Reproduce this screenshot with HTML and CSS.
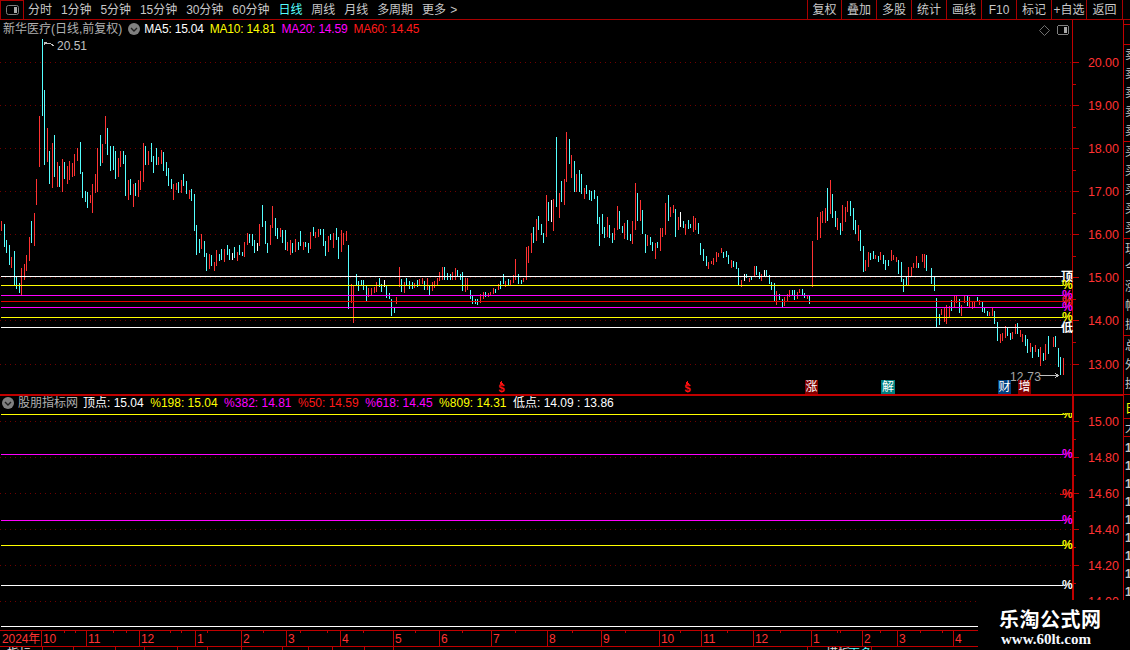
FILE: index.html
```html
<!DOCTYPE html>
<html lang="zh-CN">
<head>
<meta charset="utf-8">
<title>新华医疗 日线</title>
<link rel="stylesheet" href="styles.css">
</head>
<body>
<div class="app">
  <header class="toolbar">
    <button class="panel-btn" aria-label="panel">
      <svg class="panel-icon" viewBox="0 0 13 10"><rect x=".5" y=".5" width="12" height="9" rx="2" class="icon-frame"/><rect x="8" y="2" width="3" height="6" class="icon-fill"/></svg>
    </button>
    <nav class="periods">
      <span>分时</span><span>1分钟</span><span>5分钟</span><span>15分钟</span><span>30分钟</span><span>60分钟</span><span class="active">日线</span><span>周线</span><span>月线</span><span>多周期</span><span>更多 <i class="more">&gt;</i></span>
    </nav>
    <div class="tools">
      <span>复权</span><span>叠加</span><span>多股</span><span>统计</span><span>画线</span><span>F10</span><span>标记</span><span>+自选</span><span>返回</span>
    </div>
  </header>

  <div class="workspace">
    <main class="charts">
      <section class="panel main-panel">
        <svg class="chart" viewBox="0 20 1123 374">
          <path class="grid" d="M0 62.5H1072M0 105.5H1072M0 148.5H1072M0 191.5H1072M0 234.5H1072M0 277.5H1072M0 320.5H1072M0 364.5H1072"/>
          <g transform="translate(.17 100) scale(.33333)">
            <path class="bar-r" d="M4 363V393M34 471V503M64 504V585M73 492V540M79 465V513M88 411V483M103 339V437M109 237V315M118 48V201M142 84V186M157 129V264M172 186V261M187 177V276M202 198V252M208 183V240M217 189V231M223 162V228M232 144V183M271 285V309M277 252V339M286 222V279M292 145V276M307 132V189M316 48V132M355 174V231M361 153V201M385 240V300M400 252V321M415 240V291M421 213V270M430 129V246M445 153V195M475 171V195M484 150V192M520 252V300M529 249V270M544 240V279M568 270V297M604 402V447M628 462V507M643 486V513M649 450V498M673 447V486M712 456V483M733 426V471M742 399V435"/>
            <path class="bar-c" d="M13 372V441M19 420V459M28 435V495M43 453V555M49 531V567M58 549V579M94 363V429M127 -183V48M133 -30V195M148 153V252M163 105V231M178 198V261M193 186V237M241 126V222M247 216V294M256 273V306M262 276V324M301 105V198M322 84V165M331 138V213M340 138V210M346 153V237M370 153V192M376 165V288M391 237V285M406 249V288M436 138V195M454 129V186M460 168V219M469 144V195M490 156V213M499 186V228M505 204V258M514 237V267M535 246V279M550 222V258M559 243V282M574 267V303M583 282V393M589 375V465M598 417V459M613 423V471M619 459V513M634 465V498M658 462V483M664 447V480M682 435V465M688 447V480M703 441V474M718 435V465M727 456V468M748 402V429"/>
            <path class="bar-w" d="M697 459V480"/>
          </g>
          <g transform="translate(250.17 120) scale(.33333)">
            <path class="bar-r" d="M28 312V378M61 315V375M67 258V324M91 324V351M112 366V393M121 360V405M136 357V396M160 366V390M181 336V387M196 336V354M205 327V351M235 348V396M250 339V384M274 330V396M280 339V375M289 333V363M304 492V549M310 498V609M355 504V531M364 504V528M373 501V519M379 486V516M439 531V552M448 441V501M463 486V519M493 489V504M508 477V498M517 474V492M532 474V510M547 486V513M553 483V504M562 474V495M568 456V483M577 441V480M607 456V480M616 444V480M646 474V516M652 474V510M691 522V549M700 516V537M715 519V531M721 516V525M730 504V522M745 492V510M766 483V501M781 480V495M790 465V489M796 417V480M820 474V486M829 381V480M835 378V429M844 339V399M859 297V363M889 225V351"/>
            <path class="bar-c" d="M7 342V378M13 360V399M37 255V321M46 303V372M52 369V399M76 294V348M82 324V357M97 330V369M106 330V390M127 369V399M145 366V390M151 333V378M166 366V381M175 369V399M190 321V348M211 327V345M220 327V378M226 363V408M241 342V360M259 324V360M265 351V417M295 375V567M319 462V495M325 483V513M334 480V495M340 480V510M349 498V543M388 474V501M394 492V516M409 498V534M418 519V537M424 537V588M433 564V579M454 477V516M469 474V495M478 483V507M487 486V507M502 480V501M523 483V510M538 495V525M583 441V480M592 459V480M601 462V480M622 450V471M631 462V480M637 456V513M661 510V537M667 528V552M676 537V552M682 537V555M706 516V531M736 507V519M751 483V507M760 462V492M775 477V495M805 462V492M814 480V492M850 321V369M865 288V330M874 312V345M880 339V369M895 246V303"/>
            <path class="bar-w" d="M22 369V393M403 480V501"/>
          </g>
          <g transform="translate(520.17 120) scale(.33333)">
            <path class="bar-r" d="M100 237V333M118 219V294M133 177V255M139 36V186M154 105V174M169 162V216M193 204V237M262 291V351M283 324V360M292 258V330M313 309V357M337 303V372M346 189V330M361 240V303M382 345V378M406 369V417M421 324V393M427 324V351M436 249V345M451 261V291M460 255V279M475 291V330M496 312V345M520 288V336M526 294V330M565 426V447M574 423V432M580 414V435M589 396V426M595 399V411M604 384V399M634 420V444M664 480V501M688 474V486M703 438V468M724 462V483M769 513V555M793 531V558M802 522V543M808 510V531M832 516V537M838 507V519M862 528V537M877 363V501"/>
            <path class="bar-c" d="M109 51V261M124 183V246M148 57V132M163 123V216M178 150V216M184 162V222M199 195V222M208 210V240M214 213V243M223 210V237M232 228V312M238 291V378M247 282V342M253 321V354M268 315V354M277 339V369M298 273V327M307 318V339M322 300V360M331 342V363M352 219V303M367 270V342M376 342V399M391 351V375M397 366V393M412 366V384M445 225V303M466 267V351M490 303V324M505 300V327M511 312V324M535 309V342M541 369V405M550 387V423M559 408V438M610 396V414M619 393V411M625 405V432M640 423V441M649 426V447M655 444V495M679 462V474M694 471V480M709 438V465M718 456V477M739 450V468M748 465V492M754 486V510M763 489V543M778 522V540M787 537V561M817 510V525M823 510V540M847 507V525M853 519V534M868 528V552"/>
            <path class="bar-w" d="M94 240V306M481 276V321M673 462V483M733 450V468"/>
          </g>
          <g transform="translate(790.17 170) scale(.33333)">
            <path class="bar-r" d="M82 141V210M91 126V204M97 123V159M106 114V159M121 30V132M142 144V180M157 105V183M166 111V156M172 93V126M205 165V213M226 270V303M235 246V291M256 255V267M271 246V270M304 240V273M310 255V270M319 261V276M355 291V345M364 291V318M370 279V294M379 258V294M397 252V276M403 252V294M454 417V435M463 411V456M469 405V462M478 408V444M493 378V414M499 378V399M514 405V438M523 378V399M538 381V414M547 396V417M553 396V411M568 390V405M598 426V438M607 414V438M631 492V519M637 489V513M646 468V504M667 486V507M676 462V492M691 480V501M697 492V516M721 519V546M736 525V546M751 531V588M766 522V570M790 501V531M820 564V615"/>
            <path class="bar-c" d="M112 54V153M127 72V144M136 123V171M151 159V195M181 93V138M190 114V180M196 150V192M211 180V243M220 228V306M241 249V270M250 243V267M265 258V276M280 255V282M286 270V300M295 270V288M325 270V312M334 276V336M340 327V366M349 318V348M385 279V294M409 255V303M424 294V342M433 321V363M439 384V471M448 432V465M484 390V423M508 387V429M532 378V408M562 381V393M577 396V426M583 414V429M592 423V438M613 423V462M622 456V513M652 471V498M661 489V510M682 459V492M706 495V528M712 507V549M727 531V564M745 537V561M760 549V573M775 498V552M796 498V531M805 534V591M811 561V615"/>
          </g>
          <path class="lvl-w" d="M1 276.5H1063M1 327.5H1063"/>
          <path class="lvl-y" d="M1 285.5H1063M1 317.5H1063"/>
          <path class="lvl-m" d="M1 295.5H1063M1 307.5H1063"/>
          <path class="lvl-r" d="M1 301.5H1063"/>
          <path class="axis" d="M1072.5 20V394"/>
          <path class="axis" d="M1072 62.5H1079M1072 105.5H1079M1072 148.5H1079M1072 191.5H1079M1072 234.5H1079M1072 277.5H1079M1072 320.5H1079M1072 364.5H1079M1072 84.5H1076M1072 127.5H1076M1072 170.5H1076M1072 213.5H1076M1072 256.5H1076M1072 299.5H1076M1072 342.5H1076"/>
          <g class="price">
            <text x="1088" y="67">20.00</text><text x="1088" y="110">19.00</text><text x="1088" y="153">18.00</text><text x="1088" y="196">17.00</text><text x="1088" y="239">16.00</text><text x="1088" y="282">15.00</text><text x="1088" y="325">14.00</text><text x="1088" y="369">13.00</text>
          </g>
          <g class="lvl-label">
            <text class="t-w" x="1061" y="281">顶</text><text class="t-y" x="1062" y="289">%</text><text class="t-m" x="1062" y="299">%</text><text class="t-r" x="1062" y="305">%</text><text class="t-m" x="1062" y="311">%</text><text class="t-y" x="1062" y="321">%</text><text class="t-w" x="1061" y="332">低</text>
          </g>
          <text class="note" x="57" y="50">20.51</text>
          <path class="note-line" d="M44 42L47 44L50 43.500L54 46M44 42V45M44 42L47 42"/>
          <text class="note wide" x="1010" y="381">12.73</text>
          <path class="note-line" d="M1040 375.500H1058M1055 373L1058 375.500L1055 378"/>
          <g class="signal">
            <path class="sig-arrow" d="M501.500 381L499.500 384H503.500ZM687.500 381L685.500 384H689.500Z"/>
            <text x="501.500" y="392">$</text><text x="687.500" y="392">$</text>
          </g>
          <g class="badge">
            <rect class="bg-red" x="805" y="380" width="13" height="14"/><text x="811.500" y="391">涨</text>
            <rect class="bg-teal" x="881" y="380" width="14" height="14"/><text x="888" y="391">解</text>
            <rect class="bg-blue" x="998" y="380" width="13" height="14"/><text x="1004.500" y="391">财</text>
            <rect class="bg-red" x="1018" y="380" width="13" height="14"/><text x="1024.500" y="391">增</text>
          </g>
          <path class="diamond" d="M1044.500 25.500L1049.500 30.500L1044.500 35.500L1039.500 30.500Z"/>
          <rect class="icon-frame" x="1057.500" y="25.500" width="11" height="9" rx="2"/>
          <rect class="icon-fill" x="1064" y="27" width="3" height="6"/>
        </svg>
        <div class="legend main-legend">
          <span class="title">新华医疗(日线,前复权)</span>
          <svg class="chev" viewBox="0 0 12 12"><circle cx="6" cy="6" r="6" class="chev-bg"/><path d="M3 5L6 8L9 5" class="chev-mark"/></svg>
          <span class="c-w">MA5: 15.04</span><span class="c-y">MA10: 14.81</span><span class="c-m">MA20: 14.59</span><span class="c-r">MA60: 14.45</span>
        </div>
      </section>

      <section class="panel sub-panel">
        <svg class="chart" viewBox="0 396 1123 234">
          <defs><clipPath id="clip-top"><rect x="1060" y="413" width="12" height="10"/></clipPath></defs>
          <path class="grid" d="M0 421.500H1072M0 457.500H1072M0 493.500H1072M0 529.500H1072M0 565.500H1072M0 601.500H1072"/>
          <path class="lvl-y" d="M1 414.500H1063M1 545.500H1063"/>
          <path class="lvl-m" d="M1 454.500H1063M1 520.500H1063"/>
          <path class="lvl-w" d="M1 585.500H1063M1 626.500H978"/>
          <path class="lvl-r" d="M1060 494.500H1063"/>
          <path class="axis thick" d="M1073 396V630"/>
          <path class="axis" d="M1072 421.500H1079M1072 457.500H1079M1072 493.500H1079M1072 529.500H1079M1072 565.500H1079M1072 601.500H1079M1072 439.500H1076M1072 475.500H1076M1072 511.500H1076M1072 547.500H1076M1072 583.500H1076"/>
          <g class="price">
            <text x="1088" y="426">15.00</text><text x="1088" y="462">14.80</text><text x="1088" y="498">14.60</text><text x="1088" y="534">14.40</text><text x="1088" y="570">14.20</text><text x="1088" y="606">14.00</text>
          </g>
          <g class="lvl-label">
            <text class="t-y" x="1062" y="418" clip-path="url(#clip-top)">%</text><text class="t-m" x="1062" y="458">%</text><text class="t-r" x="1062" y="498">%</text><text class="t-m" x="1062" y="524">%</text><text class="t-y" x="1062" y="549">%</text><text class="t-w" x="1062" y="589">%</text>
          </g>
        </svg>
        <div class="legend sub-legend">
          <svg class="chev" viewBox="0 0 12 12"><circle cx="6" cy="6" r="6" class="chev-bg"/><path d="M3 5L6 8L9 5" class="chev-mark"/></svg>
          <span class="title">股朋指标网</span>
          <span class="c-w first">顶点: 15.04</span><span class="c-y">%198: 15.04</span><span class="c-m">%382: 14.81</span><span class="c-r">%50: 14.59</span><span class="c-m">%618: 14.45</span><span class="c-y">%809: 14.31</span><span class="c-w">低点: 14.09 : 13.86</span>
        </div>
      </section>

      <svg class="timeaxis" viewBox="0 630 1123 20">
        <path class="axis" d="M0 630.500H1123M0 646.500H1123"/>
        <path class="axis" d="M41.500 630V646M86.500 630V646M139.500 630V646M195.500 630V646M241.500 630V646M286.500 630V646M340.500 630V646M393.500 630V646M439.500 630V646M491.500 630V646M547.500 630V646M601.500 630V646M659.500 630V646M701.500 630V646M753.500 630V646M811.500 630V646M862.500 630V646M897.500 630V646M953.500 630V646"/>
        <path class="axis" d="M64.500 630V633M75.500 630V633M113.500 630V633M126.500 630V633M170.500 630V633M181.500 630V633M207.500 630V633M263.500 630V633M300.500 630V633M327.500 630V633M363.500 630V633M415.500 630V633M462.500 630V633M515.500 630V633M572.500 630V633M625.500 630V633M680.500 630V633M727.500 630V633M780.500 630V633M837.500 630V633M840.500 630V633M880.500 630V633M920.500 630V633M942.500 630V633"/>
        <g class="price time">
          <text x="2" y="643">2024年</text><text x="43" y="643">10</text><text x="88" y="643">11</text><text x="141" y="643">12</text><text x="197" y="643">1</text><text x="243" y="643">2</text><text x="288" y="643">3</text><text x="342" y="643">4</text><text x="395" y="643">5</text><text x="441" y="643">6</text><text x="493" y="643">7</text><text x="549" y="643">8</text><text x="603" y="643">9</text><text x="661" y="643">10</text><text x="703" y="643">11</text><text x="755" y="643">12</text><text x="813" y="643">1</text><text x="864" y="643">2</text><text x="899" y="643">3</text><text x="955" y="643">4</text>
        </g>
        <path class="axis" d="M42.500 646V650M73.500 646V650M115.500 646V650M144.500 646V650M177.500 646V650M207.500 646V650M241.500 646V650M282.500 646V650M308.500 646V650M332.500 646V650M364.500 646V650M393.500 646V650M807.500 646V650M839.500 646V650M871.500 646V650"/>
        <text class="tab-text" x="7" y="658">指标</text>
        <text class="tab-text" x="826" y="658">模板</text>
        <text class="tab-text cyan" x="848" y="658">更多</text>
      </svg>
    </main>

    <aside class="side">
      <div class="side-block top-gap"></div>
      <div class="side-block rows-top"></div>
      <div class="side-block rows-a"><span>卖</span><span>卖</span><span>卖</span><span>卖</span><span>卖</span></div>
      <div class="side-block rows-a"><span>买</span><span>买</span><span>买</span><span>买</span><span>买</span></div>
      <div class="side-block rows-a"><span>现</span><span>今</span><span>涨</span><span>幅</span><span>振</span></div>
      <div class="side-block rows-b"><span>总</span><span>外</span><span>换</span></div>
      <div class="side-block flag"><b>日</b></div>
      <div class="side-block rows-c"><span>大</span></div>
      <div class="side-block digits"><span>1</span><span>1</span><span>1</span><span>1</span><span>1</span><span>1</span><span>1</span><span>1</span><span>1</span></div>
    </aside>
  </div>

  <div class="watermark">
    <div class="wm-cn">乐淘公式网</div>
    <div class="wm-en">www.60lt.com</div>
  </div>
</div>
</body>
</html>
```

FILE: styles.css
```css
* { box-sizing: border-box; }
html, body { margin: 0; height: 100%; background: #000; overflow: hidden; }
body { font: 12px/1 "Liberation Sans", "Noto Sans CJK SC", sans-serif; color: #c8c8c8; }

.app { position: relative; width: 1130px; height: 650px; background: #000; overflow: hidden; }

/* toolbar */
.toolbar { display: flex; height: 20px; border-bottom: 1px solid #a80000; }
.panel-btn { width: 24px; height: 19px; padding: 0; background: #000; border: 1px solid #a80000; border-bottom: 0; display: flex; align-items: center; justify-content: center; }
.panel-icon { width: 13px; height: 10px; }
.icon-frame { fill: none; stroke: #808080; stroke-width: 1; }
.icon-fill { fill: #a8a8a8; }
.periods { display: flex; align-items: center; gap: 9px; padding-left: 4px; letter-spacing: -.05px; }
.periods .active { color: #54ffff; }
.more { font-style: normal; margin-left: 1px; }
.tools { display: flex; margin-left: auto; margin-right: 7px; height: 19px; }
.tools span { display: flex; align-items: center; justify-content: center; border-left: 1px solid #a80000; white-space: nowrap; width: 35px; }
.tools span:first-child { width: 34px; }
.tools span:last-child { width: 37px; border-right: 1px solid #a80000; }

/* panels */
.workspace { display: flex; height: 630px; }
.charts { width: 1123px; flex: none; display: flex; flex-direction: column; }
.panel { position: relative; }
.main-panel { height: 376px; border-bottom: 2px solid #c00000; }
.sub-panel { height: 234px; }
.chart { display: block; width: 1123px; height: 100%; shape-rendering: crispEdges; }
.main-panel .chart { height: 374px; }
.timeaxis { display: block; width: 1123px; height: 20px; flex: none; shape-rendering: crispEdges; }

.grid { fill: none; stroke: #700000; stroke-width: 1; stroke-dasharray: 1 4; }
.bar-r, .bar-c, .bar-w { fill: none; stroke-width: 3; }
.bar-r { stroke: #ff3232; }
.bar-c { stroke: #54ffff; }
.bar-w { stroke: #fff; }
.lvl-w, .lvl-y, .lvl-m, .lvl-r { fill: none; stroke-width: 1; }
.lvl-w { stroke: #fff; }
.lvl-y { stroke: #ffff00; }
.lvl-m { stroke: #ff00ff; }
.lvl-r { stroke: #e00000; }
.axis { fill: none; stroke: #c00000; stroke-width: 1; }
.axis.thick { stroke-width: 2; }

.price text { fill: #ff3232; font-size: 12.5px; letter-spacing: -.1px; }
.price.time text { font-size: 12px; }
.lvl-label text { font-size: 12px; font-weight: bold; }
.t-w { fill: #fff; }
.t-y { fill: #ffff00; }
.t-m { fill: #ff00ff; }
.t-r { fill: #ff2020; }
.note { fill: #c0c0c0; font-size: 12px; }
.note.wide { letter-spacing: .2px; fill: #a8a8a8; }
.note-line { fill: none; stroke: #c0c0c0; stroke-width: 1; }
.diamond { fill: none; stroke: #707070; stroke-width: 1; shape-rendering: geometricPrecision; }

.signal text { fill: #ff1010; font-size: 11px; font-weight: bold; text-anchor: middle; }
.sig-arrow { fill: #ff1010; }
.badge text { fill: #fff; font-size: 12px; text-anchor: middle; }
.bg-red { fill: #800000; }
.bg-teal { fill: #008080; }
.bg-blue { fill: #004080; }

.tab-text { fill: #e0e0e0; font-size: 12px; }
.tab-text.cyan { fill: #54ffff; }

/* legends */
.legend { position: absolute; left: 0; display: flex; align-items: center; height: 14px; gap: 6px; white-space: nowrap; }
.main-legend { top: 2px; left: 3px; letter-spacing: -.2px; }
.sub-legend { top: 0; left: 2px; gap: 6.5px; }
.sub-legend .title { margin-left: -2.5px; }
.sub-legend .first { margin-left: -1.500px; }
.title { color: #b0b0b0; letter-spacing: 0; }
.main-legend .chev { margin-right: -2px; }
.chev { width: 12px; height: 12px; flex: none; }
.chev-bg { fill: #808080; }
.chev-mark { fill: none; stroke: #202020; stroke-width: 1.4; }
.c-w { color: #fff; }
.c-y { color: #ffff00; }
.c-m { color: #ff00ff; }
.c-r { color: #ff1a1a; }

/* right strip */
.side { width: 7px; flex: none; border-left: 1px solid #c00000; display: flex; flex-direction: column; overflow: hidden; color: #c4c4c4; font-size: 12px; }
.side-block { flex: none; padding-left: 1px; border-bottom: 1px solid #c00000; overflow: hidden; display: flex; flex-direction: column; }
.top-gap { height: 5px; }
.rows-top { height: 20px; }
.rows-a { height: 97px; justify-content: space-around; }
.rows-b { height: 59px; justify-content: space-around; }
.flag { height: 24px; padding-top: 8px; color: #ffff00; }
.flag b { font-weight: normal; }
.rows-c { height: 18px; padding-top: 3px; }
.digits { height: 170px; border-bottom: 0; padding-top: 5px; gap: 6px; font-weight: bold; }
.digits span { height: 12px; display: block; }

/* watermark */
.watermark { position: absolute; right: 0; bottom: 0; width: 152px; height: 50px; background: #000; color: #fff; font-weight: bold; padding: 10px 0 0 21px; }
.wm-cn { font-size: 20px; line-height: 20px; letter-spacing: .5px; }
.wm-en { font: bold 15px/15px "Liberation Serif", serif; margin: 2px 0 0 2px; color: #f4f8ff; }
```
